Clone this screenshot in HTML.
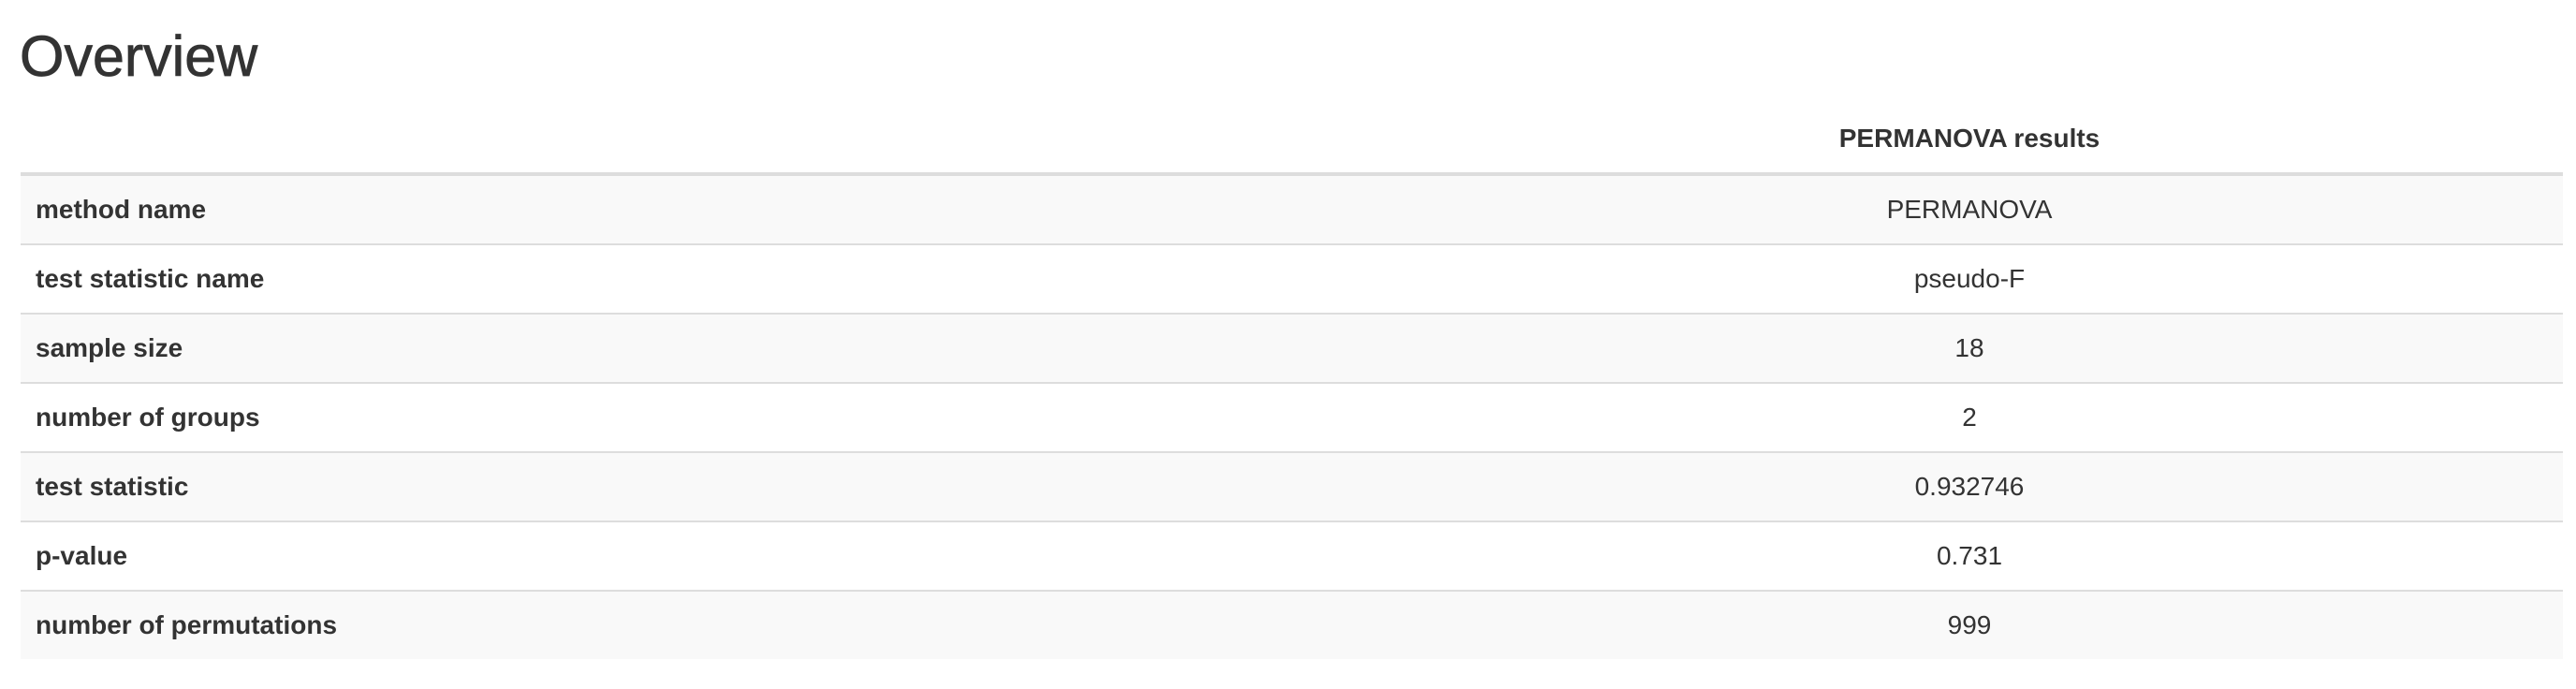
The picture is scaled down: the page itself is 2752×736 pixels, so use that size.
<!DOCTYPE html>
<html><head><meta charset="utf-8"><style>
html,body{margin:0;padding:0;background:#fff;width:2752px;height:736px;overflow:hidden}
body{font-family:"Liberation Sans",Helvetica,Arial,sans-serif;color:#333;font-size:28px;line-height:40px}
h2{font-size:61px;line-height:66px;font-weight:500;margin:0;position:absolute;left:21px;top:27px;-webkit-text-stroke:0.8px #333}
table{position:absolute;left:22px;top:112px;width:2716px;border-collapse:collapse;border-spacing:0}
th,td{padding:16px;line-height:40px;vertical-align:top}
thead th{border-bottom:4px solid #ddd;text-align:center;font-weight:bold}
tbody td{border-top:2px solid #ddd}
tbody tr:first-child td{border-top:0}
tbody tr:nth-child(odd){background:#f9f9f9}
tbody td:first-child{font-weight:bold;text-align:left;width:1416px}
tbody td:last-child{text-align:center}
</style></head><body>
<h2>Overview</h2>
<table>
<thead><tr><th></th><th>PERMANOVA results</th></tr></thead>
<tbody>
<tr><td>method name</td><td>PERMANOVA</td></tr>
<tr><td>test statistic name</td><td>pseudo-F</td></tr>
<tr><td>sample size</td><td>18</td></tr>
<tr><td>number of groups</td><td>2</td></tr>
<tr><td>test statistic</td><td>0.932746</td></tr>
<tr><td>p-value</td><td>0.731</td></tr>
<tr><td>number of permutations</td><td>999</td></tr>
</tbody>
</table>
</body></html>
